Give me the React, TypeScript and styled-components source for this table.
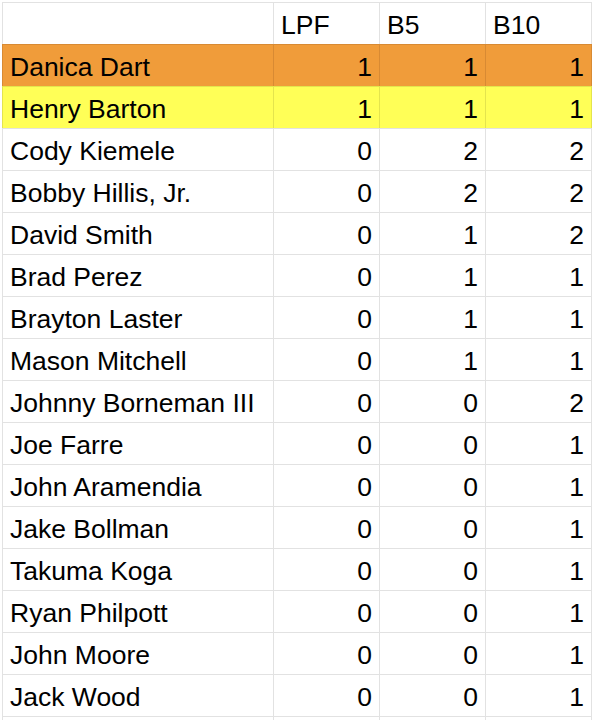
import styled, { createGlobalStyle } from "styled-components";

const GlobalStyle = createGlobalStyle`
  html, body {
    margin: 0;
    padding: 0;
    background: #ffffff;
    height: 720px;
    overflow: hidden;
  }
  body {
    font-family: "Liberation Sans", Arial, sans-serif;
  }
`;

type Tint = "none" | "orange" | "yellow";

const tints: Record<Tint, { bg: string; line: string }> = {
  none: { bg: "#ffffff", line: "#e2e2e2" },
  orange: { bg: "#f09c3a", line: "#d88a33" },
  yellow: { bg: "#ffff57", line: "#e4e44d" },
};

type Row = { name: string; lpf: number; b5: number; b10: number; tint?: Tint };

// ranking sheet
const rows: Row[] = [
  { name: "Danica Dart", lpf: 1, b5: 1, b10: 1, tint: "orange" },
  { name: "Henry Barton", lpf: 1, b5: 1, b10: 1, tint: "yellow" },
  { name: "Cody Kiemele", lpf: 0, b5: 2, b10: 2 },
  { name: "Bobby Hillis, Jr.", lpf: 0, b5: 2, b10: 2 },
  { name: "David Smith", lpf: 0, b5: 1, b10: 2 },
  { name: "Brad Perez", lpf: 0, b5: 1, b10: 1 },
  { name: "Brayton Laster", lpf: 0, b5: 1, b10: 1 },
  { name: "Mason Mitchell", lpf: 0, b5: 1, b10: 1 },
  { name: "Johnny Borneman III", lpf: 0, b5: 0, b10: 2 },
  { name: "Joe Farre", lpf: 0, b5: 0, b10: 1 },
  { name: "John Aramendia", lpf: 0, b5: 0, b10: 1 },
  { name: "Jake Bollman", lpf: 0, b5: 0, b10: 1 },
  { name: "Takuma Koga", lpf: 0, b5: 0, b10: 1 },
  { name: "Ryan Philpott", lpf: 0, b5: 0, b10: 1 },
  { name: "John Moore", lpf: 0, b5: 0, b10: 1 },
  { name: "Jack Wood", lpf: 0, b5: 0, b10: 1 },
];

export default function App() {
  return (
    <>
      <GlobalStyle />
      <Sheet>
        <Grid>
          <Cell $first />
          <Cell>LPF</Cell>
          <Cell>B5</Cell>
          <Cell $last>B10</Cell>
          {rows.map((r) => {
            const t = r.tint ?? "none";
            return [
              <Cell key={r.name + "n"} $tint={t} $first>
                {r.name}
              </Cell>,
              <Cell key={r.name + "a"} $tint={t} $num>
                {r.lpf}
              </Cell>,
              <Cell key={r.name + "b"} $tint={t} $num>
                {r.b5}
              </Cell>,
              <Cell key={r.name + "c"} $tint={t} $num $last>
                {r.b10}
              </Cell>,
            ];
          })}
          <Cell $first />
          <Cell />
          <Cell />
          <Cell $last />
        </Grid>
      </Sheet>
    </>
  );
}

const Sheet = styled.div`
  padding: 2px 0 0 2px;
`;

const Grid = styled.div`
  display: grid;
  grid-template-columns: 271px 106px 106px 107px;
  grid-auto-rows: 42px;
`;

const Cell = styled.div<{
  $tint?: Tint;
  $num?: boolean;
  $first?: boolean;
  $last?: boolean;
}>`
  display: flex;
  align-items: flex-end;
  justify-content: ${(p) => (p.$num ? "flex-end" : "flex-start")};
  box-sizing: border-box;
  padding: 0 7px 4px 7px;
  background: ${(p) => tints[p.$tint ?? "none"].bg};
  border-top: 1px solid ${(p) => tints[p.$tint ?? "none"].line};
  border-left: 1px solid ${(p) => tints[p.$tint ?? "none"].line};
  border-right: ${(p) =>
    p.$last ? `1px solid ${tints[p.$tint ?? "none"].line}` : "none"};
  font-size: 26.5px;
  line-height: 30px;
  color: #000000;
  white-space: nowrap;
  overflow: hidden;
`;
